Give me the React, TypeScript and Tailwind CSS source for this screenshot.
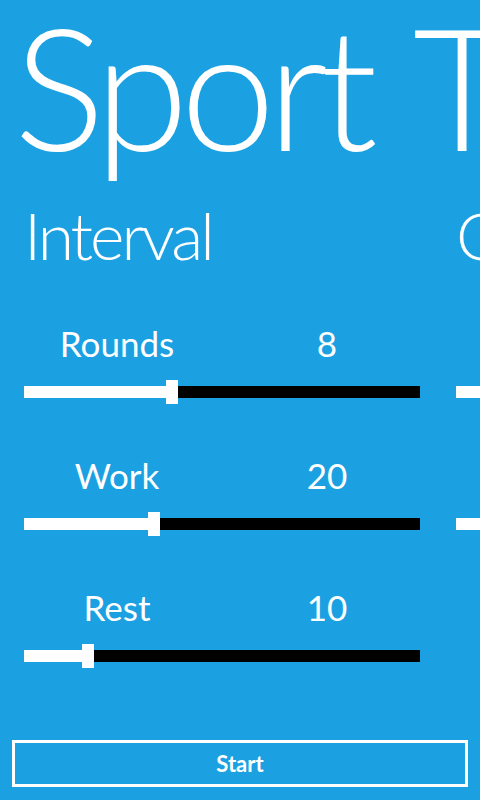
import React from "react";

type Row = { label: string; value: number; pct: number };

const interval: Row[] = [
  { label: "Rounds", value: 8, pct: 36 },
  { label: "Work", value: 20, pct: 31.5 },
  { label: "Rest", value: 10, pct: 15 },
];

const custom: Row[] = [
  { label: "Rounds", value: 5, pct: 40 },
  { label: "Work", value: 30, pct: 40 },
];

function Slider({ pct }: { pct: number }) {
  return (
    <div className="relative h-6 w-[396px]">
      <div className="absolute left-0 right-0 top-[6px] h-3 bg-black" />
      <div className="absolute left-0 top-[6px] h-3 bg-white" style={{ width: `${pct}%` }} />
      <div
        className="absolute top-0 h-6 w-3 bg-white"
        style={{ left: `calc(${pct}% - 1px)` }}
      />
    </div>
  );
}

function Section({ title, rows }: { title: string; rows: Row[] }) {
  return (
    <section className="w-[432px] shrink-0">
      <h2 className="text-[66px] font-light leading-none whitespace-nowrap tracking-[-3px]">{title}</h2>
      <div className="mt-[59px] flex flex-col gap-[55px]">
        {rows.map((r) => (
          <div key={r.label} className="flex flex-col gap-[21px]">
            <div className="flex w-[396px] gap-6 text-[35px] leading-[32px]">
              <span className="w-[186px] text-center">{r.label}</span>
              <span className="w-[186px] text-center">{r.value}</span>
            </div>
            <Slider pct={r.pct} />
          </div>
        ))}
      </div>
    </section>
  );
}

export default function App() {
  return (
    <div
      className="relative w-[480px] h-[800px] overflow-hidden bg-[#1ba1e2] text-white"
      style={{ fontFamily: 'Lato, "Open Sans", sans-serif' }}
    >
      <h1 className="ml-[14px] text-[170px] font-light leading-none whitespace-nowrap tracking-[-8px] [word-spacing:10px]">
        Sport Timer
      </h1>
      <div className="mt-[32px] flex pl-6">
        <Section title="Interval" rows={interval} />
        <Section title="Custom" rows={custom} />
      </div>
      <div className="absolute left-3 right-3 top-[740px]">
        <button className="flex h-[47px] w-full items-center justify-center border-[3px] border-white text-[22px] font-bold">
          Start
        </button>
      </div>
    </div>
  );
}
